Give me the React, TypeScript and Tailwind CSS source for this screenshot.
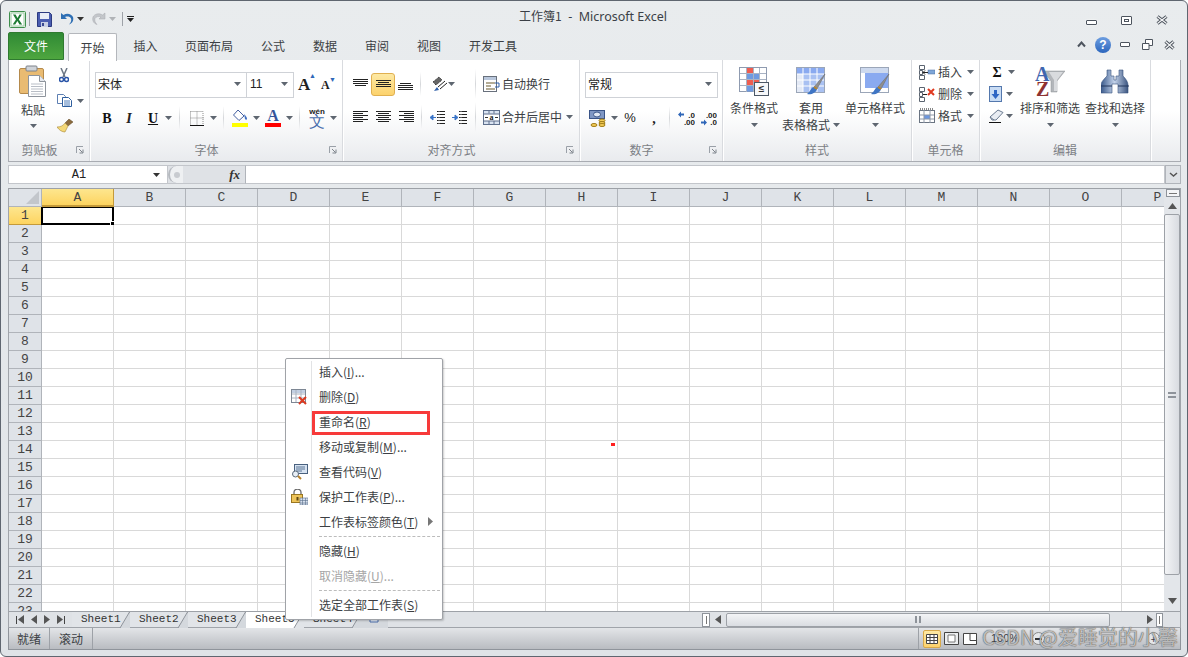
import React from "react";

const CJK = "font-['Noto_Sans_CJK_SC','Noto_Sans',sans-serif]";
const COLS = ["A","B","C","D","E","F","G","H","I","J","K","L","M","N","O","P"];

function Tri({ c = "#5e6670", cls = "" }: { c?: string; cls?: string }) {
  return <svg width="7" height="4" viewBox="0 0 7 4" className={"shrink-0 " + cls}><path d="M0 0h7L3.5 4z" fill={c} /></svg>;
}
function Sep({ cls = "" }: { cls?: string }) {
  return <div className={"w-px h-[24px] bg-gradient-to-b from-transparent via-[#d5d7da] to-transparent shrink-0 " + cls} />;
}
function Lines({ ys, w = 15, xs }: { ys: number[]; w?: number; xs: [number, number][] }) {
  return (
    <svg width={w} height="14" viewBox={`0 0 ${w} 14`} className="shrink-0">
      {ys.map((y, i) => <path key={i} d={`M${xs[i][0]} ${y + 0.5}H${xs[i][1]}`} stroke="#222" strokeWidth="1" />)}
    </svg>
  );
}
function Launcher() {
  return (
    <svg width="8" height="8" viewBox="0 0 8 8" className="shrink-0">
      <path d="M0.5 7V0.5H7" fill="none" stroke="#9aa0a8" />
      <path d="M3 3l3.5 3.5M7 3.5V7H3.5" fill="none" stroke="#7d838b" />
    </svg>
  );
}
function Group({ w, label, children, launcher = false }: { w: number; label: string; children: React.ReactNode; launcher?: boolean }) {
  return (
    <div style={{ width: w }} className="shrink-0 h-full flex flex-col border-r border-[#d9dbdf] shadow-[1px_0_0_#fff]">
      <div className="h-[81px] shrink-0 relative">{children}</div>
      <div className={"h-[20px] flex items-center justify-center relative text-[12px] text-[#7c7f85] pb-[3px] " + (launcher ? "pr-[19px]" : "")}>
        {label}
        {launcher && <span className="absolute right-[5px] top-[5px] flex"><Launcher /></span>}
      </div>
    </div>
  );
}

function ExcelLogo() {
  return (
    <svg width="17" height="17" viewBox="0 0 17 17">
      <rect x=".5" y=".5" width="16" height="16" rx="1" fill="#f1f7ee" stroke="#3f8f4d" />
      <rect x="2" y="2" width="13" height="13" fill="#fff" stroke="#9cc9a4" />
      <path d="M4 3.500h2.600L8.500 7l2-3.500h2.400L9.800 8.500l3.400 5h-2.700L8.400 10l-2.200 3.500H3.700L7 8.500z" fill="#1e7b34" />
    </svg>
  );
}
function Save() {
  return (
    <svg width="15" height="15" viewBox="0 0 15 15">
      <path d="M.5.500h12l2 2v12H.5z" fill="#4a5db0" stroke="#2c3a80" />
      <rect x="3" y="1" width="9" height="6" fill="#e8ecf6" />
      <rect x="4" y="10" width="7" height="5" fill="#c8d0e4" />
      <rect x="5" y="11" width="2" height="3" fill="#3a4a90" />
    </svg>
  );
}
function Undo({ c = "#2e6fb4" }: { c?: string }) {
  return (
    <svg width="14" height="14" viewBox="0 0 14 14">
      <path d="M1 1v6h6L5 5c2.500-1 5-.5 6 1.500.7 1.700 0 4-2 6 3.500-1 5-4.500 4-7.500C11.600 2 7 .6 3.500 3z" fill={c} />
    </svg>
  );
}
function Redo() {
  return (
    <svg width="14" height="14" viewBox="0 0 14 14">
      <path d="M13 1v6H7l2-2C6.500 4 4 4.500 3 6.500c-.7 1.700 0 4 2 6-3.500-1-5-4.500-4-7.500C2.400 2 7 .6 10.500 3z" fill="#c3c6ca" stroke="#a6a9ae" strokeWidth=".5" />
    </svg>
  );
}
function Paste() {
  return (
    <svg width="28" height="32" viewBox="0 0 28 32">
      <rect x=".5" y="3.500" width="24" height="25" rx="1.500" fill="#e9bb72" stroke="#b58a4c" />
      <rect x="7" y="1" width="11" height="5" rx="1" fill="#cfd3d8" stroke="#7d828a" />
      <path d="M9.500 10.500h11l6 6v15h-17z" fill="#fff" stroke="#8e949c" />
      <path d="M20.500 10.500v6h6" fill="#e6e9ee" stroke="#8e949c" />
      <path d="M12 19h12M12 21.500h12M12 24h12M12 26.500h12M12 29h12" stroke="#b9bec6" />
    </svg>
  );
}
function Cut() {
  return (
    <svg width="10" height="15" viewBox="0 0 10 15">
      <path d="M2 0l4 9M8 0L4 9" stroke="#6b7684" strokeWidth="1.500" />
      <circle cx="2.500" cy="11.500" r="2" fill="#fff" stroke="#2a55a8" strokeWidth="1.500" />
      <circle cx="7.500" cy="11.500" r="2" fill="#fff" stroke="#2a55a8" strokeWidth="1.500" />
    </svg>
  );
}
function Copy() {
  return (
    <svg width="15" height="13" viewBox="0 0 15 13">
      <path d="M.5.500h6l2 2v7h-8z" fill="#fff" stroke="#5d7fb3" />
      <path d="M5.500 3.500h6l3 3v6h-9z" fill="#fff" stroke="#2f5f9e" />
      <path d="M7 7h6M7 9h6M7 11h6" stroke="#4d7cba" />
    </svg>
  );
}
function Brush() {
  return (
    <svg width="17" height="14" viewBox="0 0 17 14">
      <path d="M12 0l4 3-5 4-3-3z" fill="#8b6b3e" stroke="#5f4723" strokeWidth=".5" />
      <path d="M8 4l3 3-3 6c-3 0-6-2-8-5 3 0 6-1 8-4z" fill="#f4d877" stroke="#a88a3a" strokeWidth=".6" />
    </svg>
  );
}
function Borders() {
  return (
    <svg width="15" height="15" viewBox="0 0 15 15">
      <path d="M.5.500h12.500v13M.5.500v13M7 .5v13M.5 7h13" fill="none" stroke="#8a8a8a" strokeDasharray="1 1" />
      <path d="M0 14.500h14" stroke="#111" />
    </svg>
  );
}
function FillColor() {
  return (
    <svg width="16" height="18" viewBox="0 0 16 18">
      <path d="M6 1l6 6-5 4.500-5.500-5.500z" fill="#fff" stroke="#445fa0" />
      <path d="M12 5c2 2 3 3.500 3 5 0 1-1.500 1-2 0z" fill="#3f6fc0" />
      <rect y="14" width="16" height="4" fill="#ffff00" />
    </svg>
  );
}
function FontColor() {
  return (
    <span className="relative flex flex-col items-center w-[16px] h-[18px] leading-none">
      <span className="font-['Liberation_Serif',serif] font-bold text-[16px] leading-[14px] text-[#36549a]">A</span>
      <span className="absolute bottom-0 left-0 w-[16px] h-[4px] bg-[#ff0000]" />
    </span>
  );
}
function Wen() {
  return (
    <span className="flex flex-col items-center w-[18px] h-[20px] relative">
      <span className="font-['Liberation_Sans',sans-serif] font-bold text-[8px] leading-[8px] text-[#222]">wén</span>
      <span className="text-[16px] leading-[14px] text-[#4a6fae] -mt-[1px]">文</span>
    </span>
  );
}
function Orient() {
  return (
    <svg width="16" height="16" viewBox="0 0 16 16">
      <path d="M1 6l6-5 3 3-6 5z" fill="#666" stroke="#222" strokeWidth=".8" strokeDasharray="1.500 .7" />
      <path d="M6 11l7-6" fill="none" stroke="#222" strokeWidth="1" />
      <path d="M8 13l7-6" fill="none" stroke="#222" strokeWidth="1" />
      <path d="M2 15l5-1-2-3z" fill="#2f5fa8" />
    </svg>
  );
}
function Wrap() {
  return (
    <svg width="17" height="16" viewBox="0 0 17 16">
      <rect x=".5" y=".5" width="13" height="15" fill="#fff" stroke="#68707c" />
      <rect x="1" y="1" width="12" height="3" fill="#b9c7dc" />
      <path d="M3 7h9M3 10h5M3 13h9" stroke="#6a5a2d" strokeWidth="1.200" />
      <path d="M12 7h4v4h-4" fill="none" stroke="#2f5fa8" />
    </svg>
  );
}
function Merge() {
  return (
    <svg width="17" height="15" viewBox="0 0 17 15">
      <rect x=".5" y=".5" width="16" height="14" fill="#d9e3f1" stroke="#5e6f8c" />
      <rect x="1" y="4" width="15" height="7" fill="#fff" />
      <path d="M1 4h15M1 11h15M6 .5v3M11 .5v3M6 11v3M11 11v3" stroke="#5e6f8c" />
      <path d="M2 7.500h3M12 7.500h3" stroke="#333" />
      <text x="8.500" y="10" fontSize="8" fontWeight="700" textAnchor="middle" fontFamily="Liberation Serif" fill="#222">a</text>
    </svg>
  );
}
function Indent({ flip = false }: { flip?: boolean }) {
  return (
    <svg width="16" height="15" viewBox="0 0 16 15">
      <path d="M7 1.500h8M7 4.500h8M7 7.500h8M7 10.500h8M7 13.500h8" stroke="#222" />
      <path d="M9 .5v14" stroke="#fff" strokeDasharray="1 1" />
      {flip ? <path d="M0 7.500h3V5l3 2.500L3 10V7.500" fill="#3a74c8" stroke="#3a74c8" /> : <path d="M6 7.500H3V5L0 7.500 3 10V7.500" fill="#3a74c8" stroke="#3a74c8" />}
    </svg>
  );
}
function Money() {
  return (
    <svg width="17" height="17" viewBox="0 0 17 17">
      <rect x=".5" y=".5" width="15" height="8" fill="#7f97c4" stroke="#3a5487" />
      <ellipse cx="8" cy="4.500" rx="3.500" ry="2.500" fill="#dfe7f4" stroke="#3a5487" />
      <ellipse cx="13" cy="10.500" rx="3" ry="1.500" fill="#f3cc57" stroke="#a07c18" />
      <ellipse cx="13" cy="13" rx="3" ry="1.500" fill="#f3cc57" stroke="#a07c18" />
      <ellipse cx="13" cy="15" rx="3" ry="1.500" fill="#f3cc57" stroke="#a07c18" />
      <ellipse cx="5" cy="15" rx="3" ry="1.500" fill="#f3cc57" stroke="#a07c18" />
    </svg>
  );
}
function DecIcon({ a, b, left }: { a: string; b: string; left: boolean }) {
  return (
    <svg width="17" height="15" viewBox="0 0 17 15">
      <text x="17" y="6.500" fontSize="8" textAnchor="end" fontFamily="Liberation Sans" fontWeight="700" fill="#222">{a}</text>
      <text x="17" y="14" fontSize="8" textAnchor="end" fontFamily="Liberation Sans" fontWeight="700" fill="#222">{b}</text>
      {left
        ? <path d="M0 3.500l3-3v2h3v2H3v2z" fill="#2f66b8" />
        : <path d="M7 11.500l-3-3v2H1v2h3v2z" fill="#2f66b8" />}
    </svg>
  );
}
function Cond() {
  return (
    <svg width="31" height="29" viewBox="0 0 31 29">
      <rect x=".5" y=".5" width="27" height="24" fill="#fff" stroke="#8f9bb0" />
      <rect x="8" y="1" width="6.500" height="5.500" fill="#ee5d50" />
      <rect x="8" y="7" width="12.500" height="5.500" fill="#6f9ae0" />
      <rect x="8" y="13" width="12.500" height="5.500" fill="#ee5d50" />
      <rect x="8" y="19" width="6.500" height="5.500" fill="#6f9ae0" />
      <path d="M7.500 1v24M14.500 1v24M20.500 1v24M1 6.500h26M1 12.500h26M1 18.500h26" stroke="#a9b3c4" />
      <rect x="15.500" y="15.500" width="14" height="13" fill="#f7f8fa" stroke="#4d5866" />
      <text x="22.500" y="25" fontSize="10" textAnchor="middle" fontFamily="Liberation Sans" fontWeight="700" fill="#333">≤</text>
    </svg>
  );
}
function TableFmt({ big = false }: { big?: boolean }) {
  return (
    <svg width="30" height="28" viewBox="0 0 30 28">
      <rect x=".5" y=".5" width="28" height="25" fill={big ? "#fff" : "#e4eaf6"} stroke="#9ba6b8" />
      {big ? (
        <>
          <rect x="1" y="1" width="27" height="5" fill="#cdd9ee" />
          <rect x="5" y="6" width="23" height="15" fill="#8aaaf0" />
        </>
      ) : (
        <>
          <rect x="1" y="1" width="27" height="6" fill="#8aaaf0" />
          <rect x="7" y="7" width="21" height="18" fill="#a9c1f2" />
          <path d="M7 1v24M14 1v24M21 1v24M1 7h27M1 13h27M1 19h27" stroke="#fff" />
        </>
      )}
      <path d="M29 7L18 20l3 2z" fill="#8f8f8f" stroke="#666" strokeWidth=".5" />
      <path d="M18 20c-3 0-3 4-7 7 4 1 9-1 10-5z" fill="#3f75c4" />
      <path d="M18 20l3 2" stroke="#b8862e" strokeWidth="2" />
    </svg>
  );
}
function InsCell() {
  return (
    <svg width="16" height="15" viewBox="0 0 16 15">
      <path d="M.5.500h5v4h-5zM.5 10.500h5v4h-5zM.5 5.500h3v4h-3z" fill="#fff" stroke="#5b6470" />
      <rect x="9" y="5" width="7" height="4" fill="#7ea6d8" stroke="#49699c" strokeWidth=".5" />
      <path d="M4 7.500h5M6 5.500l-2 2 2 2" fill="none" stroke="#222" />
    </svg>
  );
}
function DelCell() {
  return (
    <svg width="16" height="15" viewBox="0 0 16 15">
      <path d="M.5.500h5v4h-5zM.5 10.500h5v4h-5zM.5 5.500h3v4h-3z" fill="#fff" stroke="#5b6470" />
      <path d="M9 2l6 6M15 2L9 8" stroke="#e0391f" strokeWidth="2" />
      <path d="M4 7.500h4" stroke="#222" />
    </svg>
  );
}
function FmtCell() {
  return (
    <svg width="16" height="16" viewBox="0 0 16 16">
      <rect x=".5" y="2.500" width="15" height="12" fill="#fff" stroke="#6a7482" />
      <rect x="5" y="7" width="6" height="4" fill="#6c97e0" />
      <path d="M5 2v13M11 2v13M1 7h14M1 11h14" stroke="#8e98a8" />
      <path d="M1 1h14" stroke="#111" strokeDasharray="1 1" />
    </svg>
  );
}
function FillDown() {
  return (
    <svg width="13" height="16" viewBox="0 0 13 16">
      <rect x=".5" y=".5" width="12" height="15" fill="#c9dcf4" stroke="#5478ad" />
      <path d="M5 4h3v4h2.500L6.500 13 2.500 8H5z" fill="#2f66c4" />
    </svg>
  );
}
function Eraser() {
  return (
    <svg width="15" height="14" viewBox="0 0 15 14">
      <path d="M9 1l5 2.500-7 7.500H3L1 8z" fill="#e9edf3" stroke="#6a7a90" />
      <path d="M1 8l4 3" stroke="#6a7a90" />
      <path d="M0 13.500h12" stroke="#111" />
    </svg>
  );
}
function SortFilter() {
  return (
    <span className="relative block w-[30px] h-[30px]">
      <svg width="30" height="30" viewBox="0 0 30 30" className="absolute left-0 top-0">
        <path d="M8 5h22l-8 10v11h-6V15z" fill="#b3b6ba" stroke="#8d9095" strokeWidth=".5" />
        <path d="M14 6h14l-6 8v11h-3V14z" fill="#d9dbde" />
      </svg>
      <span className="absolute left-0 -top-[1px] font-['Liberation_Serif',serif] font-bold text-[20px] leading-[18px] text-[#3f66b0]">A</span>
      <span className="absolute left-[1px] top-[14px] font-['Liberation_Serif',serif] font-bold text-[20px] leading-[18px] text-[#8e3232]">Z</span>
    </span>
  );
}
function Bino() {
  return (
    <svg width="28" height="26" viewBox="0 0 28 26">
      <defs>
        <linearGradient id="bn" x1="0" x2="1" y1="0" y2="0"><stop offset="0" stopColor="#3a5a8c" /><stop offset=".5" stopColor="#c4d3ea" /><stop offset="1" stopColor="#3b5580" /></linearGradient>
      </defs>
      <path d="M6 1h4v6h3v4h2V7h3V1h4v6c3 3 5 6 5 9v8H17v-9h-6v9H0v-8c0-3 3-6 6-9z" fill="url(#bn)" stroke="#35517e" strokeWidth=".6" transform="translate(0 1)" />
      <path d="M0 18h11M17 18h11" stroke="#22375c" />
    </svg>
  );
}
function Del16() {
  return (
    <svg width="17" height="16" viewBox="0 0 17 16">
      <rect x=".5" y=".5" width="14" height="13" fill="#fff" stroke="#7d8794" />
      <rect x="1" y="1" width="13" height="3" fill="#c2cfe2" />
      <path d="M5 1v12M10 1v12M1 5h13M1 9h13" stroke="#a9b2bf" />
      <path d="M8 8l7 7M15 8l-7 7" stroke="#dc3a20" strokeWidth="2" />
    </svg>
  );
}
function Code16() {
  return (
    <svg width="17" height="16" viewBox="0 0 17 16">
      <rect x="3.500" y=".5" width="13" height="9" fill="#d7e3f2" stroke="#49617f" />
      <path d="M5 3h9M5 5h9M5 7h6" stroke="#5c7795" />
      <circle cx="4.500" cy="10" r="3" fill="#e7eef6" stroke="#5b6a7a" />
      <path d="M7 12l3 3" stroke="#b6822d" strokeWidth="2" />
    </svg>
  );
}
function Lock16() {
  return (
    <svg width="17" height="16" viewBox="0 0 17 16">
      <path d="M3 6V3.500a3.500 3.500 0 0 1 7 0V6" fill="none" stroke="#6b6b6b" strokeWidth="1.300" />
      <rect x=".5" y="5.500" width="11" height="8" fill="#eec459" stroke="#9a7620" />
      <rect x="5.500" y="8" width="2" height="3.500" fill="#5e4610" />
      <rect x="9" y="9" width="8" height="7" fill="#d6e0ee" stroke="#5b6f8c" strokeWidth=".6" />
      <path d="M11.500 9v7M14.500 9v7M9 11.500h8M9 14h8" stroke="#5b6f8c" strokeWidth=".6" />
    </svg>
  );
}
function X({ w = 12 }: { w?: number }) {
  return (
    <svg width={w} height="10" viewBox={`0 0 ${w} 10`}>
      <path d={`M1.500 1.500L${w - 1.5} 8.500M${w - 1.5} 1.500L1.500 8.500`} fill="none" stroke="#4d545e" strokeWidth="3.200" />
      <path d={`M1.500 1.500L${w - 1.5} 8.500M${w - 1.5} 1.500L1.500 8.500`} fill="none" stroke="#f4f5f6" strokeWidth="1.200" />
    </svg>
  );
}

function Small({ x, children }: { x: number; children: React.ReactNode }) {
  return <span style={{ marginLeft: x }} className="flex items-center shrink-0">{children}</span>;
}
const Row = ({ cls = "", children }: { cls?: string; children: React.ReactNode }) => (
  <div className={"flex items-center " + cls}>{children}</div>
);

function Ribbon() {
  return (
    <div className={`h-[102px] ml-[7px] mr-[6px] flex border-x border-b border-[#a9acb2] bg-gradient-to-b from-white via-white to-[#e9ebee] ${CJK} text-[12px] text-[#3c3f44]`}>
      <Group w={81} label="剪贴板" launcher>
        <div className="flex h-full">
          <div className="w-[46px] flex flex-col items-center pt-[5px] ml-[1px]">
            <Paste />
            <span className="mt-[4px] leading-[18px]">粘贴</span>
            <span className="mt-[5px]"><Tri /></span>
          </div>
          <div className="flex flex-col pt-[8px] pl-[1px]">
            <span className="h-[16px] flex pl-[2px]"><Cut /></span>
            <span className="h-[13px] mt-[10px] flex items-center gap-[5px]"><Copy /><Tri /></span>
            <span className="mt-[12px] flex"><Brush /></span>
          </div>
        </div>
      </Group>
      <Group w={253} label="字体" launcher>
        <div className="flex flex-col pl-[5px] pt-[12px]">
          <Row>
            <div className="w-[152px] h-[26px] border border-[#cfd2d7] bg-white flex items-center justify-between px-[2px] pr-[5px] pb-[2px]"><span className="text-[#222]">宋体</span><Tri /></div>
            <div className="w-[47px] h-[26px] border border-l-0 border-[#cfd2d7] bg-white flex items-center justify-between px-[3px] pr-[5px] pb-[2px]"><span className="text-[#222] font-['Liberation_Sans',sans-serif]">11</span><Tri /></div>
            <span className="relative ml-[4px] w-[16px] font-['Liberation_Serif',serif] font-bold text-[17px] text-[#222]">A<span className="absolute -top-[1px] left-[11px] text-[7px] text-[#2f66b8]">▲</span></span>
            <span className="relative ml-[7px] w-[14px] font-['Liberation_Serif',serif] font-bold text-[12px] text-[#222]">A<span className="absolute -top-[1px] left-[8px] text-[7px] text-[#2f66b8]">▼</span></span>
          </Row>
          <Row cls="mt-[8px] h-[24px] font-['Liberation_Serif',serif]">
            <span className="ml-[6px] w-[12px] text-center font-bold text-[14px] text-[#111]">B</span>
            <span className="ml-[10px] w-[12px] text-center font-bold italic text-[14px] text-[#222]">I</span>
            <span className="ml-[12px] w-[12px] text-center font-bold underline text-[14px] text-[#111]">U</span>
            <Small x={6}><Tri /></Small>
            <Sep cls="ml-[7px]" />
            <Small x={10}><Borders /></Small>
            <Small x={5}><Tri /></Small>
            <Sep cls="ml-[6px]" />
            <Small x={8}><FillColor /></Small>
            <Small x={5}><Tri /></Small>
            <Small x={5}><FontColor /></Small>
            <Small x={5}><Tri /></Small>
            <Sep cls="ml-[6px]" />
            <Small x={8}><Wen /></Small>
            <Small x={4}><Tri /></Small>
          </Row>
        </div>
      </Group>
      <Group w={237} label="对齐方式" launcher>
        <div className="flex flex-col pl-[10px] pt-[12px]">
          <Row cls="h-[24px]">
            <Lines w={15} ys={[2, 4, 6, 8]} xs={[[0, 15], [0, 15], [0, 15], [2, 13]]} />
            <span className="ml-[3px] w-[24px] h-[23px] rounded-[3px] border border-[#e0b050] bg-gradient-to-b from-[#fde9a4] to-[#fcd26c] flex items-center justify-center"><Lines w={15} ys={[3, 5, 7, 9]} xs={[[0, 15], [2, 13], [0, 15], [0, 15]]} /></span>
            <span className="ml-[3px] flex"><Lines w={15} ys={[6, 8, 10, 12]} xs={[[2, 13], [0, 15], [0, 15], [0, 15]]} /></span>
            <Sep cls="ml-[7px]" />
            <Small x={11}><Orient /></Small>
            <Small x={0}><Tri /></Small>
            <Sep cls="ml-[20px] h-[30px]" />
            <Small x={7}><Wrap /></Small>
            <span className="ml-[2px]">自动换行</span>
          </Row>
          <Row cls="mt-[9px] h-[24px]">
            <Lines w={15} ys={[1, 3, 5, 7, 9, 11]} xs={[[0, 15], [0, 10], [0, 15], [0, 10], [0, 15], [0, 10]]} />
            <span className="ml-[8px] flex"><Lines w={15} ys={[1, 3, 5, 7, 9, 11]} xs={[[0, 15], [2, 13], [0, 15], [2, 13], [0, 15], [2, 13]]} /></span>
            <span className="ml-[8px] flex"><Lines w={15} ys={[1, 3, 5, 7, 9, 11]} xs={[[0, 15], [5, 15], [0, 15], [5, 15], [0, 15], [5, 15]]} /></span>
            <Sep cls="ml-[7px]" />
            <Small x={8}><Indent /></Small>
            <Small x={6}><Indent flip /></Small>
            <Sep cls="ml-[7px] h-[30px]" />
            <Small x={7}><Merge /></Small>
            <span className="ml-[2px]">合并后居中</span>
            <Small x={4}><Tri /></Small>
          </Row>
        </div>
      </Group>
      <Group w={143} label="数字" launcher>
        <div className="flex flex-col pl-[5px] pt-[12px]">
          <div className="w-[133px] h-[26px] border border-[#cfd2d7] bg-white flex items-center justify-between px-[2px] pr-[5px] pb-[2px]"><span className="text-[#222]">常规</span><Tri /></div>
          <Row cls="mt-[8px] h-[24px]">
            <Small x={4}><Money /></Small>
            <Small x={5}><Tri /></Small>
            <span className="ml-[5px] w-[14px] text-center text-[13px] text-[#222] font-['Liberation_Sans',sans-serif]">%</span>
            <span className="ml-[10px] w-[14px] text-center font-bold text-[14px] text-[#222] font-['Liberation_Serif',serif]">,</span>
            <Sep cls="ml-[8px]" />
            <Small x={8}><DecIcon a=".0" b=".00" left /></Small>
            <Small x={5}><DecIcon a=".00" b=".0" left={false} /></Small>
          </Row>
        </div>
      </Group>
      <Group w={189} label="样式">
        <div className="flex text-center">
          <div className="w-[48px] ml-[7px] flex flex-col items-center pt-[7px] shrink-0">
            <Cond />
            <span className="mt-[3px] leading-[18px] whitespace-nowrap">条件格式</span>
            <span className="mt-[6px]"><Tri /></span>
          </div>
          <div className="w-[66px] flex flex-col items-center pt-[7px] shrink-0">
            <TableFmt />
            <span className="mt-[4px] leading-[18px]">套用</span>
            <span className="leading-[16px] whitespace-nowrap flex items-center gap-[3px]">表格格式<Tri /></span>
          </div>
          <div className="w-[60px] ml-[1px] flex flex-col items-center pt-[7px] shrink-0">
            <TableFmt big />
            <span className="mt-[4px] leading-[18px] whitespace-nowrap">单元格样式</span>
            <span className="mt-[6px]"><Tri /></span>
          </div>
        </div>
      </Group>
      <Group w={68} label="单元格">
        <div className="flex flex-col pt-[1px] pl-[7px] gap-[6px] mt-[3px]">
          <Row cls="h-[16px] gap-[3px]"><InsCell /><span>插入</span><Tri cls="ml-[2px]" /></Row>
          <Row cls="h-[16px] gap-[3px]"><DelCell /><span>删除</span><Tri cls="ml-[2px]" /></Row>
          <Row cls="h-[16px] gap-[3px]"><FmtCell /><span>格式</span><Tri cls="ml-[2px]" /></Row>
        </div>
      </Group>
      <Group w={171} label="编辑">
        <div className="flex">
          <div className="w-[36px] pl-[9px] shrink-0 flex flex-col pt-[4px] gap-[6px]">
            <Row cls="h-[16px]"><span className="w-[16px] text-center font-['Liberation_Serif',serif] font-bold text-[14px] text-[#111]">Σ</span><Tri cls="ml-[3px]" /></Row>
            <Row cls="h-[16px]"><FillDown /><Tri cls="ml-[4px]" /></Row>
            <Row cls="h-[16px]"><Eraser /><Tri cls="ml-[2px]" /></Row>
          </div>
          <div className="w-[60px] ml-[4px] flex flex-col items-center pt-[6px] shrink-0">
            <span className="flex"><SortFilter /></span>
            <span className="mt-[3px] leading-[18px] whitespace-nowrap">排序和筛选</span>
            <span className="mt-[6px]"><Tri /></span>
          </div>
          <div className="w-[60px] ml-[5px] flex flex-col items-center pt-[8px] shrink-0">
            <Bino />
            <span className="mt-[5px] leading-[18px] whitespace-nowrap">查找和选择</span>
            <span className="mt-[6px]"><Tri /></span>
          </div>
        </div>
      </Group>
      <div className="flex-1" />
    </div>
  );
}

function Arrow({ d }: { d: "up" | "down" | "left" | "right" }) {
  const p = { up: "M0 6h9L4.500 0z", down: "M0 0h9L4.500 6z", left: "M6 0v9L0 4.500z", right: "M0 0v9l6-4.500z" }[d];
  const vert = d === "up" || d === "down";
  return <svg width={vert ? 9 : 6} height={vert ? 6 : 9} viewBox={vert ? "0 0 9 6" : "0 0 6 9"}><path d={p} fill="#555" /></svg>;
}

function Grid() {
  return (
    <div className="flex-1 min-w-0 flex flex-col overflow-hidden bg-white">
      <div className="h-[19px] flex shrink-0 font-['Liberation_Mono',monospace] text-[13px] text-[#444] border-t border-[#9da1a7]">
        <div className="w-[33px] shrink-0 bg-[#dfe3e8] border-r border-b border-[#b0b4ba] flex items-end justify-end p-[2px]">
          <svg width="13" height="13" viewBox="0 0 13 13"><path d="M13 0v13H0z" fill="#c2c6cb" /></svg>
        </div>
        {COLS.map((c, i) => (
          <div key={c} className={"w-[72px] shrink-0 flex items-center justify-center border-r pt-[1px] " + (i === 0 ? "bg-gradient-to-b from-[#fde68e] to-[#fdd45f] border-[#c49a3a] border-b-2" : "bg-[#dfe3e8] border-[#b0b4ba] border-b")}>{c}</div>
        ))}
      </div>
      <div className="flex-1 overflow-hidden">
        {Array.from({ length: 23 }, (_, r) => (
          <div key={r} className="h-[18px] flex">
            <div className={"w-[33px] shrink-0 flex items-center justify-center border-r border-b pt-[1px] text-[13px] font-['Liberation_Mono',monospace] " + (r === 0 ? "bg-gradient-to-b from-[#fde68e] to-[#fdd45f] border-[#c49a3a] text-[#444]" : "bg-[#dfe3e8] border-[#b0b4ba] text-[#444]")}>{r + 1}</div>
            {COLS.map((c, i) => (
              <div key={c} className="w-[72px] shrink-0 border-r border-b border-[#d9d9d9] relative">
                {r === 0 && i === 0 && (
                  <span className="absolute -left-[1px] -top-[1px] w-[73px] h-[19px] border-2 border-black">
                    <span className="absolute -right-[3px] -bottom-[3px] w-[5px] h-[5px] bg-black border border-white" />
                  </span>
                )}
                {r === 13 && i === 8 && <span className="absolute left-[-7px] top-[2px] w-[4px] h-[3px] bg-[#ff2020]" />}
              </div>
            ))}
          </div>
        ))}
      </div>
    </div>
  );
}

function VScroll() {
  return (
    <div className="w-[16px] shrink-0 flex flex-col bg-[#e3e6ea] border-t border-[#9da1a7]">
      <div className="h-[8px] ml-[2px] shrink-0 border border-[#8e939a] bg-[#f4f5f7] flex items-center justify-center"><span className="w-[8px] h-px bg-[#777]" /></div>
      <div className="h-[17px] shrink-0 flex items-center justify-center"><Arrow d="up" /></div>
      <div className="h-[361px] shrink-0 border border-[#9da1a7] rounded-[2px] bg-gradient-to-r from-[#f3f4f6] to-[#d9dce1] flex items-center justify-center">
        <span className="w-[8px] h-[6px] border-y-2 border-double border-[#8e939a]" />
      </div>
      <div className="flex-1" />
      <div className="h-[20px] shrink-0 flex items-center justify-center"><Arrow d="down" /></div>
    </div>
  );
}

function SheetTab({ name, active = false }: { name: string; active?: boolean }) {
  return (
    <div className={"w-[58px] h-[16px] shrink-0 relative flex items-center pl-[9px] border-r " + (active ? "bg-white border-[#8e939a]" : "bg-[#e1e4e8] border-[#a0a4aa] border-b")}>
      <span className="font-['Liberation_Mono',monospace] text-[11px] text-[#333]">{name}</span>
      <svg width="14" height="16" viewBox="0 0 14 16" className="absolute -right-[1px] top-0"><path d="M14 0L4 16H14z" fill={active ? "#e1e4e8" : "#d4d8dd"} /><path d="M13.500 0L4 16" stroke="#8e939a" /></svg>
    </div>
  );
}

function MenuItem({ label, u, tail = "", icon, disabled = false, arrow = false }: { label: string; u: string; tail?: string; icon?: React.ReactNode; disabled?: boolean; arrow?: boolean }) {
  return (
    <div className={"h-[25px] flex items-center relative " + (disabled ? "text-[#a6a6a6]" : "text-[#3c3f44]")}>
      <span className="w-[26px] shrink-0 flex justify-center">{icon}</span>
      <span className="ml-[7px] whitespace-nowrap">{label}(<span className="underline">{u}</span>){tail}</span>
      {arrow && <span className="absolute right-[9px] top-[8px] flex"><svg width="5" height="9" viewBox="0 0 5 9"><path d="M0 0v9l5-4.500z" fill="#777" /></svg></span>}
    </div>
  );
}
function MenuSep() {
  return <div className="h-[4px] ml-[33px] mr-[2px] flex items-center"><div className="w-full border-t border-dashed border-[#bcbcbc]" /></div>;
}

export default function App() {
  return (
    <div className={`w-[1188px] h-[657px] relative overflow-hidden rounded-[6px] border border-[#5f6670] bg-gradient-to-b from-[#e9ecee] to-[#dfe3e7] flex flex-col ${CJK}`}>
      {/* title */}
      <div className="h-[31px] shrink-0 flex items-center relative">
        <div className="flex items-center mt-[5px] shrink-0">
          <span className="ml-[8px] flex"><ExcelLogo /></span>
          <span className="ml-[3px] w-px h-[14px] bg-[#9ea2a8]" />
          <span className="ml-[7px] flex"><Save /></span>
          <span className="ml-[8px] flex"><Undo /></span>
          <span className="ml-[3px] flex"><Tri c="#333" /></span>
          <span className="ml-[8px] flex"><Redo /></span>
          <span className="ml-[3px] flex"><Tri c="#b0b3b7" /></span>
          <span className="ml-[6px] w-px h-[14px] bg-[#9ea2a8]" />
          <span className="ml-[4px] flex flex-col items-center gap-[1px]"><span className="w-[7px] h-px bg-[#222]" /><Tri c="#222" /></span>
        </div>
        <span className="ml-[385px] text-[#3b3f46] whitespace-pre text-[12px]">工作簿1<span className="text-[12.5px] font-['Noto_Sans',sans-serif]">  -  Microsoft Excel</span></span>
        <span className="flex-1" />
        <div className="flex items-end h-[10px] mt-[6px] shrink-0">
          <span className="w-[11px] h-[5px] border border-[#4d545e] bg-white rounded-[1px] shadow-[0_0_2px_#fff]" />
          <span className="ml-[24px] w-[11px] h-[9px] border border-[#4d545e] bg-white rounded-[1px] flex items-center justify-center"><span className="w-[5px] h-[3px] border border-[#4d545e]" /></span>
          <span className="ml-[24px] mr-[19px] flex"><X /></span>
        </div>
      </div>
      {/* tabs */}
      <div className="h-[28px] shrink-0 flex items-end relative text-[12px] text-[#3c3f44]">
        <div className="ml-[7px] w-[56px] h-[28px] rounded-t-[2px] border border-[#2f7a30] bg-gradient-to-b from-[#2f8a35] to-[#4ea63f] text-white flex items-center justify-center">文件</div>
        <div className="ml-[4px] w-[49px] h-[28px] rounded-t-[2px] border border-b-0 border-[#b4b7bc] bg-white flex items-center justify-center relative z-10 -mb-[1px]">开始</div>
        {[["插入", 57], ["页面布局", 70], ["公式", 58], ["数据", 46], ["审阅", 58], ["视图", 46], ["开发工具", 82]].map(([t, w]) => (
          <div key={t as string} style={{ width: w as number }} className="h-[28px] flex items-center justify-center">{t}</div>
        ))}
        <div className="flex-1" />
        <div className="h-[28px] flex items-center pr-[4px] pb-[3px]">
          <svg width="9" height="7" viewBox="0 0 9 7"><path d="M1 5.500l3.500-4 3.500 4" fill="none" stroke="#4d545e" strokeWidth="2" /></svg>
          <span className="ml-[9px] w-[16px] h-[16px] rounded-full bg-gradient-to-b from-[#6d9ee0] to-[#2b66bd] text-white text-[12px] font-bold flex items-center justify-center font-['Liberation_Sans',sans-serif]">?</span>
          <span className="ml-[9px] w-[10px] h-[5px] border border-[#4d545e] bg-white rounded-[1px]" />
          <span className="ml-[12px] flex"><svg width="11" height="11" viewBox="0 0 11 11"><path d="M3.500.5h7v6h-7z" fill="#fff" stroke="#4d545e" /><path d="M.5 4.500h6.500v6H.5z" fill="#fff" stroke="#4d545e" /></svg></span>
          <span className="ml-[11px] mr-[8px] flex"><X w={11} /></span>
        </div>
      </div>
      <Ribbon />
      {/* formula bar */}
      <div className="h-[26px] shrink-0 ml-[7px] mr-[6px] pt-[3px] flex bg-transparent">
        <div className="w-[160px] h-[19px] bg-white border border-[#c3c6cb] flex items-center">
          <span className="flex-1 text-center font-['Liberation_Mono',monospace] text-[12px] text-[#222] pr-[4px]">A1</span>
          <span className="mr-[7px] flex"><Tri c="#333" /></span>
        </div>
        <div className="w-[77px] h-[19px] bg-[#dfe2e6] flex items-center relative border-y border-[#c3c6cb]">
          <span className="w-[15px] h-[17px] rounded-l-full border-l-2 border-[#b6bac0] bg-[#eef0f2] flex items-center justify-center"><span className="w-[6px] h-[6px] rounded-full bg-[#c8cbd0]" /></span>
          <span className="flex-1" />
          <span className="mr-[5px] font-['Liberation_Serif',serif] italic font-bold text-[13px] text-[#333]">fx</span>
        </div>
        <div className="flex-1 h-[19px] bg-white border border-[#c3c6cb] border-l-[#b0b4ba]" />
        <div className="w-[16px] h-[19px] bg-[#dfe2e6] border border-[#b0b4ba] flex items-center justify-center">
          <svg width="9" height="6" viewBox="0 0 9 6"><path d="M1 1l3.500 3L8 1" fill="none" stroke="#555" strokeWidth="1.500" /></svg>
        </div>
      </div>
      {/* sheet */}
      <div className="flex-1 min-h-0 ml-[7px] mr-[6px] flex flex-col border-x border-b border-[#a0a4aa]">
        <div className="flex-1 min-h-0 flex">
          <Grid />
          <VScroll />
        </div>
        <div className="h-[16px] shrink-0 flex items-center bg-[#dfe2e6] border-t border-[#9da1a7]">
          <div className="w-[63px] shrink-0 flex items-center justify-around px-[4px] text-[#444]">
            <span className="flex items-center gap-[1px]"><span className="w-px h-[8px] bg-[#444]" /><Arrow d="left" /></span>
            <Arrow d="left" /><Arrow d="right" />
            <span className="flex items-center gap-[1px]"><Arrow d="right" /><span className="w-px h-[8px] bg-[#444]" /></span>
          </div>
          <SheetTab name="Sheet1" />
          <SheetTab name="Sheet2" />
          <SheetTab name="Sheet3" />
          <SheetTab name="Sheet5" active />
          <SheetTab name="Sheet4" />
          <div className="w-[26px] h-[16px] bg-[#d4d8dd] relative flex items-center justify-center">
            <svg width="12" height="8" viewBox="0 0 12 8"><path d="M1 1h8v5H1z" fill="#dfe7f4" stroke="#4a6da8" /></svg>
          </div>
          <div className="flex-1" />
          <span className="w-[8px] h-[14px] border border-[#8e939a] bg-white flex items-center justify-center"><span className="w-px h-[8px] bg-[#777]" /></span>
          <span className="ml-[5px] flex"><Arrow d="left" /></span>
          <div className="ml-[5px] w-[384px] h-[14px] rounded-[2px] border border-[#9da1a7] bg-gradient-to-b from-[#f3f4f6] to-[#dadde2] flex items-center justify-center"><span className="w-[6px] h-[7px] border-x-2 border-double border-[#8e939a]" /></div>
          <span className="ml-[37px] flex"><Arrow d="right" /></span>
          <span className="ml-[3px] w-[7px] h-[14px] border border-[#8e939a] bg-white flex items-center justify-center"><span className="w-px h-[8px] bg-[#777]" /></span>
          <div className="w-[17px]" />
        </div>
      </div>
      {/* status bar */}
      <div className="h-[22px] shrink-0 ml-[7px] mr-[6px] mb-[6px] flex items-center bg-gradient-to-b from-[#e3e5e8] to-[#b9bcc1] border-x border-b border-[#8f949b] text-[12px] text-[#3c3f44]">
        <span className="w-[41px] h-full flex items-center justify-center border-r border-[#9da1a7]">就绪</span>
        <span className="w-[43px] h-full flex items-center justify-center border-r border-[#9da1a7]">滚动</span>
        <span className="flex-1" />
        <span className="w-px h-full bg-[#9da1a7]" />
        <span className="ml-[4px] w-[18px] h-[18px] rounded-[2px] border border-[#d8a94a] bg-gradient-to-b from-[#fde9a4] to-[#fcd26c] flex items-center justify-center"><svg width="12" height="10" viewBox="0 0 12 10"><path d="M.5.500h11v9H.5zM4 .5v9M8 .5v9M.5 3.500h11M.5 6.500h11" fill="#fff" stroke="#444" /></svg></span>
        <span className="ml-[3px] flex"><svg width="15" height="13" viewBox="0 0 15 13"><path d="M.5.500h14v12H.5z" fill="#eceef0" stroke="#444" /><path d="M4 3h7v7H4z" fill="#fff" stroke="#777" /></svg></span>
        <span className="ml-[4px] flex"><svg width="14" height="12" viewBox="0 0 14 12"><path d="M.5.500h13v11H.5z" fill="#fff" stroke="#444" /><path d="M7 .5v7h6.500" fill="none" stroke="#444" /></svg></span>
        <span className="ml-[13px] w-[30px] text-center font-['Liberation_Sans',sans-serif] text-[11px]">100%</span>
        <span className="ml-[12px] w-[13px] h-[13px] rounded-full bg-[#e5e7ea] border border-[#888] flex items-center justify-center"><span className="w-[7px] h-[2px] bg-[#333]" /></span>
        <span className="w-[102px]" />
        <span className="w-[13px] h-[13px] rounded-full bg-[#e5e7ea] border border-[#888] flex items-center justify-center text-[10px] leading-none">+</span>
        <span className="w-[20px]" />
      </div>
      {/* context menu */}
      <div className="absolute left-[284px] top-[357px] w-[158px] h-[262px] bg-white border border-[#a0a3a8] rounded-[2px] shadow-[1px_1px_2px_rgba(0,0,0,0.2)] text-[12px]">
        <span className="absolute left-[25px] top-[2px] bottom-[2px] w-px bg-[#e2e3e5]" />
        <MenuItem label="插入" u="I" tail="..." />
        <MenuItem label="删除" u="D" icon={<Del16 />} />
        <MenuItem label="重命名" u="R" />
        <MenuItem label="移动或复制" u="M" tail="..." />
        <MenuItem label="查看代码" u="V" icon={<Code16 />} />
        <MenuItem label="保护工作表" u="P" tail="..." icon={<Lock16 />} />
        <MenuItem label="工作表标签颜色" u="T" arrow />
        <MenuSep />
        <MenuItem label="隐藏" u="H" />
        <MenuItem label="取消隐藏" u="U" tail="..." disabled />
        <MenuSep />
        <MenuItem label="选定全部工作表" u="S" />
        <span className="absolute left-[26px] top-[52px] w-[118px] h-[24px] border-[3px] border-[#f73a3a]" />
      </div>
      {/* watermark */}
      <span className="absolute left-[981px] top-[623px] text-[20px] leading-[26px] whitespace-nowrap text-[rgba(255,255,255,0.6)] [text-shadow:0_0_1px_#555,0_0_1px_#555] font-['Noto_Sans_CJK_SC',sans-serif]">CSDN @爱睡觉的小馨</span>
    </div>
  );
}
